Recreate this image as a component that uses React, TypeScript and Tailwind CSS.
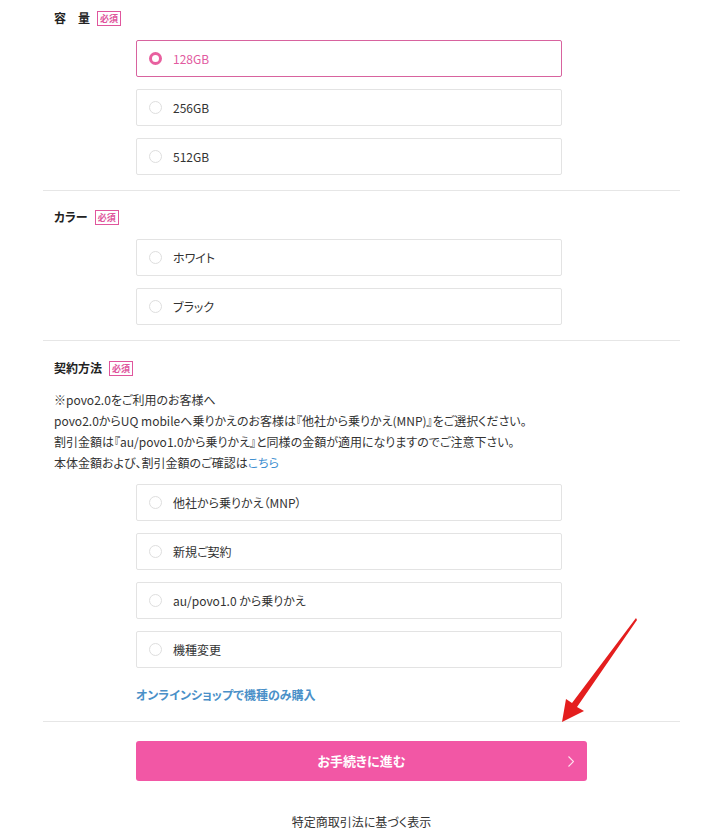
import React from 'react';

const FONT = { fontFamily: '"Noto Sans CJK JP", "Noto Sans", sans-serif' };

const Badge = () => (
  <span className="ml-[7px] inline-flex h-[15px] items-center border border-[#e0569d] px-[2px] text-[9px] font-bold leading-none text-[#e0569d]">
    必須
  </span>
);

const Option: React.FC<{ label: string; selected?: boolean }> = ({ label, selected }) => (
  <div
    className={
      selected
        ? 'flex h-[37px] w-[426px] items-center rounded-[2px] border border-[#d8639f] bg-white pl-[12px]'
        : 'flex h-[37px] w-[426px] items-center rounded-[2px] border border-[#e3e3e3] bg-white pl-[12px]'
    }
  >
    {selected ? (
      <span className="h-[13px] w-[13px] rounded-full border-[3.5px] border-[#e8609f] bg-white" />
    ) : (
      <span className="h-[13px] w-[13px] rounded-full border border-[#dedede] bg-white" />
    )}
    <span className={selected ? 'ml-[11px] text-[12px] text-[#e25aa0]' : 'ml-[11px] text-[12px] text-[#333]'}>
      {label}
    </span>
  </div>
);

const Heading: React.FC<{ children: React.ReactNode }> = ({ children }) => (
  <div className="flex h-[20px] items-center pl-[11px] text-[12px] font-bold text-[#222]">
    {children}
    <Badge />
  </div>
);

export default function App() {
  return (
    <div className="relative min-h-[840px] w-full bg-white [font-feature-settings:'palt']" style={FONT}>
      <div className="ml-[43px] w-[637px]">
        {/* 容量 */}
        <section className="border-b border-[#e6e6e6] pb-[15px] pt-[8px]">
          <Heading>
            <span>容</span>
            <span className="ml-[12px]">量</span>
          </Heading>
          <div className="ml-[93px] mt-[12px] flex flex-col gap-[12px]">
            <Option label="128GB" selected />
            <Option label="256GB" />
            <Option label="512GB" />
          </div>
        </section>

        {/* カラー */}
        <section className="border-b border-[#e6e6e6] pb-[15px] pt-[16px]">
          <Heading>カラー</Heading>
          <div className="ml-[93px] mt-[12px] flex flex-col gap-[12px]">
            <Option label="ホワイト" />
            <Option label="ブラック" />
          </div>
        </section>

        {/* 契約方法 */}
        <section className="border-b border-[#e6e6e6] pb-[17px] pt-[17px]">
          <Heading>契約方法</Heading>
          <div className="mt-[11px] pl-[11px] text-[12px] leading-[21px] text-[#333]">
            <p>※povo2.0をご利用のお客様へ</p>
            <p>povo2.0からUQ mobileへ乗りかえのお客様は『他社から乗りかえ(MNP)』をご選択ください。</p>
            <p>割引金額は『au/povo1.0から乗りかえ』と同様の金額が適用になりますのでご注意下さい。</p>
            <p>
              本体金額および、割引金額のご確認は<span className="text-[#3f8fd0]">こちら</span>
            </p>
          </div>
          <div className="ml-[93px] mt-[11px] flex flex-col gap-[12px]">
            <Option label="他社から乗りかえ（MNP）" />
            <Option label="新規ご契約" />
            <Option label="au/povo1.0 から乗りかえ" />
            <Option label="機種変更" />
          </div>
          <div className="ml-[93px] mt-[18px] text-[12px] font-bold leading-[18px] text-[#4a90c8]">
            オンラインショップで機種のみ購入
          </div>
        </section>

        {/* submit */}
        <div className="pt-[19px]">
          <button className="relative ml-[93px] flex h-[40px] w-[451px] items-center justify-center rounded-[3px] bg-[#f257a5] text-[13px] font-bold text-white">
            お手続きに進む
            <svg className="absolute right-[13px] top-[15px]" width="6" height="11" viewBox="0 0 6 11" fill="none">
              <path d="M0.5 0.5 L5.5 5.5 L0.5 10.5" stroke="#fde3ef" strokeWidth="1.1" />
            </svg>
          </button>
        </div>
        <div className="mt-[32px] text-center text-[12px] leading-[18px] text-[#333]">特定商取引法に基づく表示</div>
      </div>

      {/* red annotation arrow */}
      <svg className="pointer-events-none absolute left-0 top-0" width="702" height="840">
        <polygon points="636,618 637,620 577,707 584,711 562,722 566,699 572,703" fill="#e41e1e" />
      </svg>
    </div>
  );
}
